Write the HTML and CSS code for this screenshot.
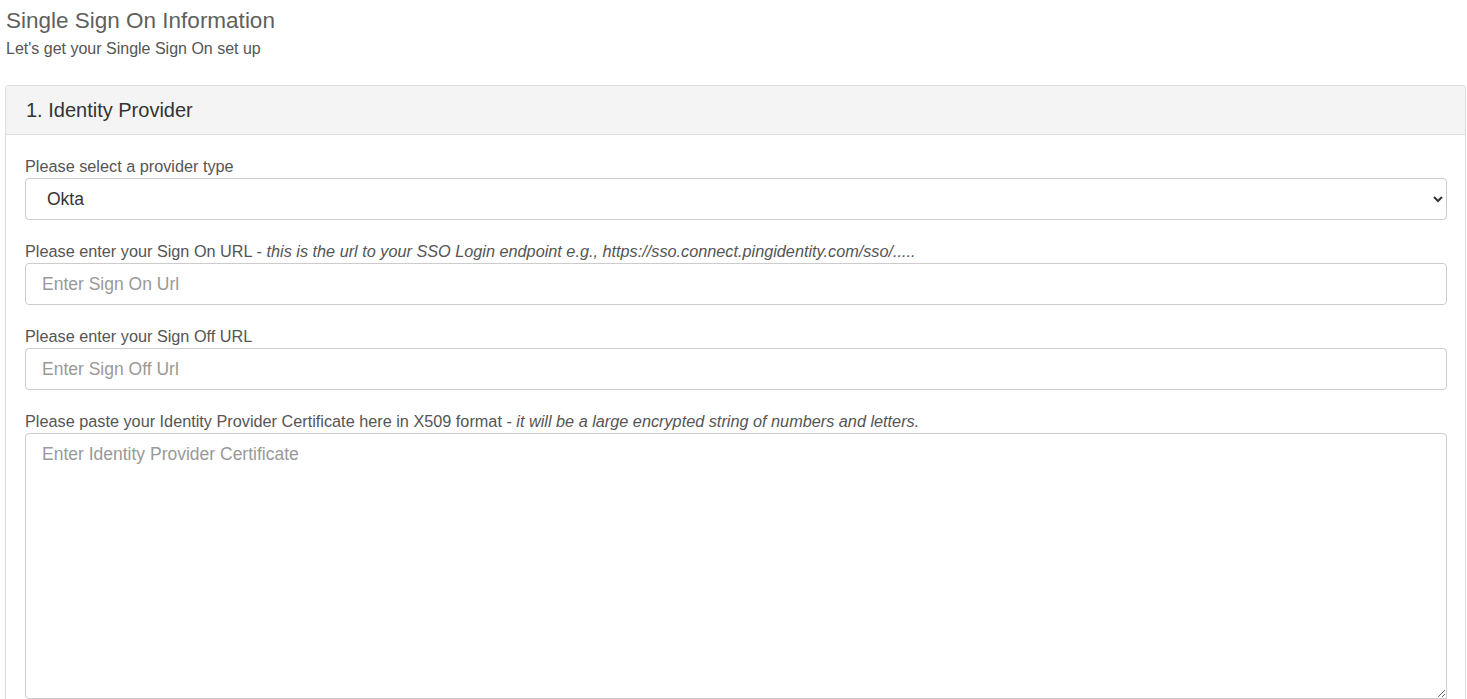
FILE: index.html
```html
<!DOCTYPE html>
<html lang="en">
<head>
    <meta charset="UTF-8">
    <meta name="viewport" content="width=device-width, initial-scale=1.0">
    <title>Single Sign On Information</title>
    <link rel="stylesheet" href="styles.css">
</head>
<body>

    <div class="page-head">
        <h1>Single Sign On Information</h1>
        <p>Let's get your Single Sign On set up</p>
    </div>

    <div class="panel">
        <div class="panel-heading">1. Identity Provider</div>
        <div class="panel-body">
            <form id="ssoForm">
                <div class="form-group">
                    <label for="providerType">Please select a provider type</label>
                    <select id="providerType" class="form-control">
                        <option>Okta</option>
                        <option>PingIdentity</option>
                        <option>Azure AD</option>
                        <option>ADFS</option>
                    </select>
                </div>
                <div class="form-group">
                    <label for="signOnUrl">Please enter your Sign On URL - <em>this is the url to your SSO Login endpoint e.g., https://sso.connect.pingidentity.com/sso/.....</em></label>
                    <input type="text" id="signOnUrl" class="form-control" placeholder="Enter Sign On Url">
                </div>
                <div class="form-group">
                    <label for="signOffUrl">Please enter your Sign Off URL</label>
                    <input type="text" id="signOffUrl" class="form-control" placeholder="Enter Sign Off Url">
                </div>
                <div class="form-group">
                    <label for="certificate">Please paste your Identity Provider Certificate here in X509 format - <em>it will be a large encrypted string of numbers and letters.</em></label>
                    <textarea id="certificate" class="form-control cert-area" placeholder="Enter Identity Provider Certificate"></textarea>
                </div>
            </form>
        </div>
    </div>

</body>
</html>
```
FILE: styles.css
```css
body {
    margin: 0;
    padding: 5px 1px 0 5px;
    font-family: 'Liberation Sans', Arial, sans-serif;
    color: #555;
    background: #fff;
}

.page-head h1 {
    margin: 0;
    padding-top: 3px;
    padding-left: 1px;
    font-size: 22.5px;
    font-weight: normal;
    line-height: 26px;
    color: #5f5f5f;
}
.page-head p {
    margin: 6px 0 0 1px;
    font-size: 16px;
    line-height: 18px;
    color: #555;
}

/* Панель */
.panel {
    margin-top: 27px;
    border: 1px solid #ddd;
    border-bottom: none;
    border-radius: 4px 4px 0 0;
}
.panel-heading {
    background-color: #f4f4f4;
    border-bottom: 1px solid #ddd;
    border-radius: 4px 4px 0 0;
    height: 48px;
    line-height: 48px;
    padding: 0 20px;
    font-size: 20px;
    color: #333;
}
.panel-body {
    padding: 19px 18px 0 19px;
}

.form-group {
    margin-bottom: 19px;
}
.form-group label {
    display: block;
    padding-top: 1px;
    font-size: 16.25px;
    line-height: 23px;
    color: #555;
}
.form-group em {
    font-style: italic;
}

/* Поля ввода */
.form-control {
    display: block;
    width: 100%;
    box-sizing: border-box;
    height: 42px;
    padding: 0 16px;
    font-family: 'Liberation Sans', Arial, sans-serif;
    font-size: 17.5px;
    color: #333;
    background-color: #fff;
    border: 1px solid #ccc;
    border-radius: 4px;
    outline: none;
}
.form-control::placeholder {
    color: #999;
}
select.form-control {
    padding-left: 17px;
}
.cert-area {
    height: 266px;
    padding: 9px 16px;
    line-height: 22px;
    resize: vertical;
    border-radius: 4px 4px 0 4px;
}
```
